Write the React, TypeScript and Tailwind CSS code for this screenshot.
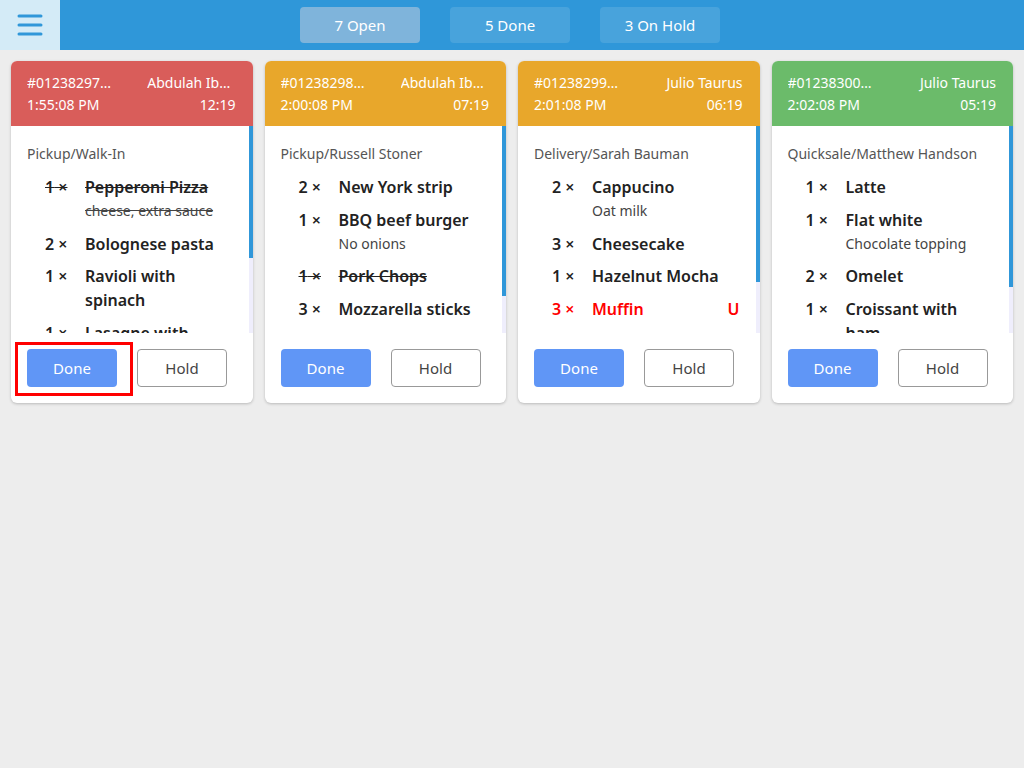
import React from "react";

// Ticket line shape
interface Item {
  qty: number;
  name: string;
  note?: string;
  done?: boolean;
  urgent?: boolean;
}

interface Order {
  id: string;
  customer: string;
  time: string;
  elapsed: string;
  headerClass: string;
  source: string;
  thumb: number; // scrollbar thumb height in px
  items: Item[];
}

const orders: Order[] = [
  {
    id: "#012382970154",
    customer: "Abdulah Ibrahim",
    time: "1:55:08 PM",
    elapsed: "12:19",
    headerClass: "bg-[#d95d5a]",
    source: "Pickup/Walk-In",
    thumb: 132,
    items: [
      { qty: 1, name: "Pepperoni Pizza", note: "cheese, extra sauce", done: true },
      { qty: 2, name: "Bolognese pasta" },
      { qty: 1, name: "Ravioli with spinach" },
      { qty: 1, name: "Lasagne with mushrooms" },
    ],
  },
  {
    id: "#012382980155",
    customer: "Abdulah Ibrahim",
    time: "2:00:08 PM",
    elapsed: "07:19",
    headerClass: "bg-[#e8a72b]",
    source: "Pickup/Russell Stoner",
    thumb: 170,
    items: [
      { qty: 2, name: "New York strip" },
      { qty: 1, name: "BBQ beef burger", note: "No onions" },
      { qty: 1, name: "Pork Chops", done: true },
      { qty: 3, name: "Mozzarella sticks" },
    ],
  },
  {
    id: "#012382990156",
    customer: "Julio Taurus",
    time: "2:01:08 PM",
    elapsed: "06:19",
    headerClass: "bg-[#e8a72b]",
    source: "Delivery/Sarah Bauman",
    thumb: 156,
    items: [
      { qty: 2, name: "Cappucino", note: "Oat milk" },
      { qty: 3, name: "Cheesecake" },
      { qty: 1, name: "Hazelnut Mocha" },
      { qty: 3, name: "Muffin", urgent: true },
    ],
  },
  {
    id: "#012383000157",
    customer: "Julio Taurus",
    time: "2:02:08 PM",
    elapsed: "05:19",
    headerClass: "bg-[#6bbb6a]",
    source: "Quicksale/Matthew Handson",
    thumb: 161,
    items: [
      { qty: 1, name: "Latte" },
      { qty: 1, name: "Flat white", note: "Chocolate topping" },
      { qty: 2, name: "Omelet" },
      { qty: 1, name: "Croissant with ham" },
    ],
  },
];

const tabs = [
  { label: "7 Open", active: true },
  { label: "5 Done", active: false },
  { label: "3 On Hold", active: false },
];

const MenuIcon = () => (
  <svg width="28" height="24" viewBox="0 0 28 24" fill="none">
    <path
      d="M3 3h22M3 12h22M3 21h22"
      stroke="#3097d9"
      strokeWidth="3"
      strokeLinecap="round"
    />
  </svg>
);

const TicketLine = ({ item }: { item: Item }) => {
  const tone = item.urgent ? "text-[#ff0000]" : "text-[#222]";
  const strike = item.done ? "line-through" : "";
  return (
    <div className={`flex pl-[18px] ${tone}`}>
      <div className={`w-10 shrink-0 text-base leading-6 font-semibold ${strike}`}>
        {item.qty} ×
      </div>
      <div className="flex-1 min-w-0">
        <div className={`text-base leading-6 font-semibold ${strike}`}>{item.name}</div>
        {item.note && (
          <div className={`text-sm leading-6 text-[#444] ${strike}`}>{item.note}</div>
        )}
      </div>
      {item.urgent && <div className="text-base leading-6 font-semibold pl-2">U</div>}
    </div>
  );
};

const OrderCard = ({ order, highlight }: { order: Order; highlight: boolean }) => (
  <div className="bg-white rounded-md shadow-[0_1px_3px_rgba(0,0,0,0.22)] overflow-hidden flex flex-col">
    {/* En-tête du ticket */}
    <div className={`${order.headerClass} text-white text-sm pl-4 pr-[17px] pt-[11px] pb-[10px]`}>
      <div className="grid grid-cols-2 gap-x-8 h-[22px] leading-[22px]">
        <span className="truncate">{order.id}</span>
        <span className="truncate text-right">{order.customer}</span>
      </div>
      <div className="flex justify-between h-[22px] leading-[22px]">
        <span>{order.time}</span>
        <span>{order.elapsed}</span>
      </div>
    </div>

    {/* Corps avec barre de défilement */}
    <div className="flex h-[207px]">
      <div className="flex-1 min-w-0 overflow-hidden pl-4 pr-4 pt-4">
        <div className="text-sm leading-6 text-[#555]">{order.source}</div>
        <div className="flex flex-col gap-[8.5px] mt-[9px]">
          {order.items.map((item, i) => (
            <TicketLine key={i} item={item} />
          ))}
        </div>
      </div>
      <div className="w-1 shrink-0 bg-[#efeefc]">
        <div className="w-1 bg-[#3097d9]" style={{ height: order.thumb }} />
      </div>
    </div>

    {/* Boutons */}
    <div className="flex gap-5 px-4 pt-4 pb-4">
      <div className="relative">
        <button className="w-[90px] h-[38px] rounded bg-[#6096f6] text-white text-[15px]">
          Done
        </button>
        {highlight && (
          <span className="absolute left-[-12px] top-[-7px] w-[118px] h-[54px] border-[3px] border-[#ff0000] pointer-events-none" />
        )}
      </div>
      <button className="w-[90px] h-[38px] rounded border border-[#999] bg-white text-[#444] text-[15px]">
        Hold
      </button>
    </div>
  </div>
);

export default function App() {
  return (
    <div className="min-h-screen bg-[#ededed] font-['Noto_Sans',sans-serif]">
      {/* Barre du haut */}
      <div className="h-[50px] bg-[#2f97d9] flex items-center">
        <button className="w-[60px] h-[50px] bg-[#d4ebf7] flex items-center justify-center">
          <MenuIcon />
        </button>
        <div className="flex gap-[30px] ml-[240px]">
          {tabs.map((t) => (
            <button
              key={t.label}
              className={`w-[120px] h-9 rounded text-white text-[15px] ${
                t.active ? "bg-[#7fb4db]" : "bg-[#48a3dc]"
              }`}
            >
              {t.label}
            </button>
          ))}
        </div>
      </div>

      {/* Tickets */}
      <div className="grid grid-cols-4 gap-3 px-[11px] pt-[11px] items-start">
        {orders.map((o, i) => (
          <OrderCard key={o.id} order={o} highlight={i === 0} />
        ))}
      </div>
    </div>
  );
}
